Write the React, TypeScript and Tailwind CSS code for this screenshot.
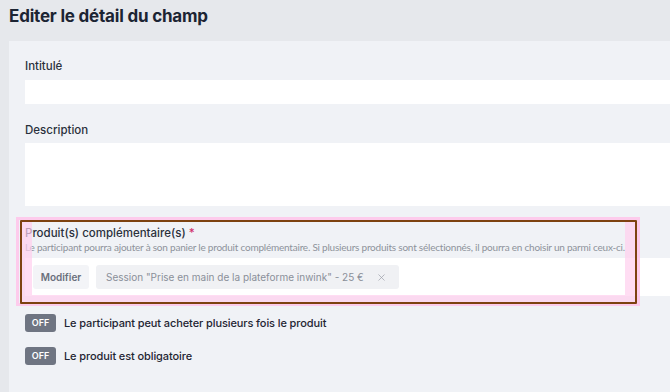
import { X } from 'lucide-react'

function Toggle({ label }: { label: string }) {
  return (
    <div className="flex items-center gap-2">
      <span className="flex h-[18px] w-[31px] items-center justify-center rounded-[3px] bg-[#6f7582] text-[9px] font-semibold text-white">
        OFF
      </span>
      <span className="text-[11px] font-medium tracking-[-0.1px] text-[#1f2532]">{label}</span>
    </div>
  )
}

export default function App() {
  return (
    <div className="h-[392px] w-[670px] overflow-hidden bg-[#e6e8ec] font-['Inter',sans-serif]">
      <h1 className="flex h-[41px] items-center pb-[7px] pl-[9px] text-[17px] font-bold tracking-[-0.2px] text-[#1c2433]">
        Editer le détail du champ
      </h1>

      <div className="ml-[9px] h-full bg-[#f0f2f6] pl-4 pt-[17px]">
        <label className="block text-[11.5px] font-medium leading-4 text-[#2a303c]">Intitulé</label>
        <div className="mt-[6px] h-[24px] bg-white" />

        <label className="mt-[18px] block text-[11.5px] font-medium leading-4 text-[#2a303c]">Description</label>
        <div className="mt-[5px] h-[63px] bg-white" />

        <div className="relative mt-[12px] pb-[9px] pt-[7px]">
          <p className="text-[11.5px] font-medium leading-4 text-[#2a303c]">
            Produit(s) complémentaire(s)
            {' '}
            <span className="text-[#d0306a]">*</span>
          </p>
          <p className="mt-[-1px] font-['Lato',sans-serif] text-[10px] leading-[14px] tracking-[-0.22px] text-[#8e929b]">
            Le participant pourra ajouter à son panier le produit complémentaire. Si plusieurs produits sont sélectionnés, il pourra en choisir un parmi ceux-ci.
          </p>
          <div className="mt-[4px] flex h-[38px] items-center gap-[7px] bg-white pl-2">
            <button className="flex h-[24px] w-[56px] items-center justify-center rounded-[3px] bg-[#f3f4f7] text-[10px] font-semibold text-[#6a707c]">
              Modifier
            </button>
            <div className="flex h-[24px] items-center gap-[12px] rounded-[3px] bg-[#f0f1f4] pl-[10px] pr-[12px] text-[10px] text-[#8a8f99]">
              <span>Session "Prise en main de la plateforme inwink" - 25 €</span>
              <X className="size-[11px] text-[#9a9ea7]" strokeWidth={1.5} />
            </div>
          </div>

          <div className="pointer-events-none absolute inset-y-[-1px] left-[-9px] w-[624px] border-[3px] border-[#ffc4ea]/85" />
          <div className="pointer-events-none absolute bottom-[1px] left-[-5px] top-[2px] w-[617px] rounded-[1px] border-2 border-[#7d4210]" />
          <div className="pointer-events-none absolute bottom-[3px] left-[-3px] top-[4px] w-[613px] border-b-[7px] border-l-[10px] border-r-[10px] border-[#ffcfee]/70" />
        </div>

        <div className="mt-[9px] flex flex-col gap-[15px]">
          <Toggle label="Le participant peut acheter plusieurs fois le produit" />
          <Toggle label="Le produit est obligatoire" />
        </div>
      </div>
    </div>
  )
}
